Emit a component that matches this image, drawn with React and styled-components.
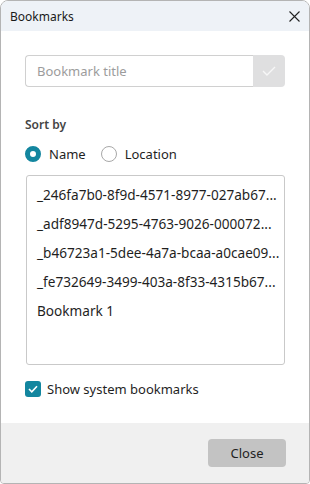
import React, { useState } from 'react'
import styled, { createGlobalStyle } from 'styled-components'

const GlobalStyle = createGlobalStyle`
  html, body {
    margin: 0;
    padding: 0;
    background: #ffffff;
  }
  body {
    font-family: "Noto Sans", "Liberation Sans", sans-serif;
    color: #1f1f1f;
  }
`;

const accent = '#13869f';

const Window = styled.div`
  box-sizing: border-box;
  width: 310px;
  height: 484px;
  border: 1px solid #b4b4b4;
  border-radius: 8px 8px 4px 4px;
  overflow: hidden;
  display: flex;
  flex-direction: column;
  background: #fff;
`;

const TitleBar = styled.div`
  height: 30px;
  flex: none;
  display: flex;
  align-items: center;
  justify-content: space-between;
  padding: 0 9px 0 9px;
  background: #eef2f7;
  font-size: 12px;
  color: #1a1a1a;
`;

const CloseX = styled.button`
  border: none;
  background: transparent;
  padding: 0;
  width: 12px;
  height: 12px;
  display: flex;
  align-items: center;
  justify-content: center;
  color: #222;
`;

const Body = styled.div`
  display: flex;
  flex-direction: column;
  padding: 24px 24px 0 24px;
`;

const InputRow = styled.div`
  display: flex;
  height: 32px;
`;

const TitleInput = styled.input`
  box-sizing: border-box;
  flex: 1;
  min-width: 0;
  height: 32px;
  border: 1px solid #d0d0d0;
  border-right: none;
  border-radius: 4px 0 0 4px;
  padding: 0 11px;
  font-family: inherit;
  font-size: 13px;
  outline: none;
  &::placeholder {
    color: #9c9c9c;
  }
`;

const ConfirmButton = styled.button`
  width: 32px;
  height: 32px;
  flex: none;
  border: none;
  border-radius: 0 4px 4px 0;
  background: #dfdfe0;
  display: flex;
  align-items: center;
  justify-content: center;
  padding: 0;
`;

const SectionLabel = styled.div`
  margin-top: 30px;
  font-size: 12px;
  line-height: 16px;
  font-weight: 600;
  color: #444;
`;

const RadioRow = styled.div`
  margin-top: 11px;
  height: 20px;
  display: flex;
  align-items: center;
  gap: 15px;
`;

const RadioOption = styled.label`
  display: flex;
  align-items: center;
  gap: 8px;
  font-size: 13px;
  color: #1f1f1f;
  cursor: pointer;
`;

const RadioCircle = styled.span`
  box-sizing: border-box;
  width: 16px;
  height: 16px;
  border-radius: 50%;
  background: #fff;
  border: ${({ $checked }) => ($checked ? `5px solid ${accent}` : '1px solid #a8a8a8')};
`;

const List = styled.div`
  box-sizing: border-box;
  margin-top: 11px;
  margin-left: 1px;
  height: 190px;
  border: 1px solid #c9c9c9;
  border-radius: 3px;
  padding: 4px 0;
  overflow: hidden;
`;

const ListItem = styled.div`
  height: 29px;
  line-height: 29px;
  padding: 0 3px 0 10px;
  font-size: 13.6px;
  color: #1f1f1f;
  white-space: nowrap;
  overflow: hidden;
  text-overflow: ellipsis;
`;

const CheckRow = styled.label`
  margin-top: 15px;
  height: 18px;
  display: flex;
  align-items: center;
  gap: 6px;
  font-size: 13px;
  color: #1f1f1f;
`;

const CheckBox = styled.span`
  width: 16px;
  height: 16px;
  border-radius: 3px;
  background: ${accent};
  display: flex;
  align-items: center;
  justify-content: center;
`;

const Footer = styled.div`
  margin-top: 25px;
  flex: 1;
  background: #f0f0f0;
  display: flex;
  justify-content: flex-end;
  align-items: flex-start;
  padding: 16px 23px 0 0;
`;

const FooterButton = styled.button`
  width: 78px;
  height: 28px;
  border: none;
  border-radius: 4px;
  background: #c3c3c3;
  font-family: inherit;
  font-size: 13px;
  color: #1f1f1f;
`;

// shown as the list clips them
const items = [
  '_246fa7b0-8f9d-4571-8977-027ab67...',
  '_adf8947d-5295-4763-9026-000072...',
  '_b46723a1-5dee-4a7a-bcaa-a0cae09...',
  '_fe732649-3499-403a-8f33-4315b67...',
  'Bookmark 1',
];

const App = () => {
  const [sort, setSort] = useState('name');
  return (
    <>
      <GlobalStyle />
      <Window>
        <TitleBar>
          <span>Bookmarks</span>
          <CloseX aria-label="Close">
            <svg width="11" height="11" viewBox="0 0 11 11">
              <path d="M0.5 0.5 L10.5 10.5 M10.5 0.5 L0.5 10.5" stroke="currentColor" strokeWidth="1.1" />
            </svg>
          </CloseX>
        </TitleBar>
        <Body>
          <InputRow>
            <TitleInput placeholder="Bookmark title" />
            <ConfirmButton>
              <svg width="14" height="10" viewBox="0 0 14 10">
                <path d="M1 5 L5 9 L13 1" fill="none" stroke="#f7f7f7" strokeWidth="1.4" />
              </svg>
            </ConfirmButton>
          </InputRow>
          <SectionLabel>Sort by</SectionLabel>
          <RadioRow>
            <RadioOption onClick={() => setSort('name')}>
              <RadioCircle $checked={sort === 'name'} />
              Name
            </RadioOption>
            <RadioOption onClick={() => setSort('location')}>
              <RadioCircle $checked={sort === 'location'} />
              Location
            </RadioOption>
          </RadioRow>
          <List>
            {items.map((it) => (
              <ListItem key={it}>{it}</ListItem>
            ))}
          </List>
          <CheckRow>
            <CheckBox>
              <svg width="10" height="8" viewBox="0 0 10 8">
                <path d="M1 4 L3.8 6.8 L9 1.2" fill="none" stroke="#fff" strokeWidth="1.6" />
              </svg>
            </CheckBox>
            Show system bookmarks
          </CheckRow>
        </Body>
        <Footer>
          <FooterButton>Close</FooterButton>
        </Footer>
      </Window>
    </>
  )
}

export default App
